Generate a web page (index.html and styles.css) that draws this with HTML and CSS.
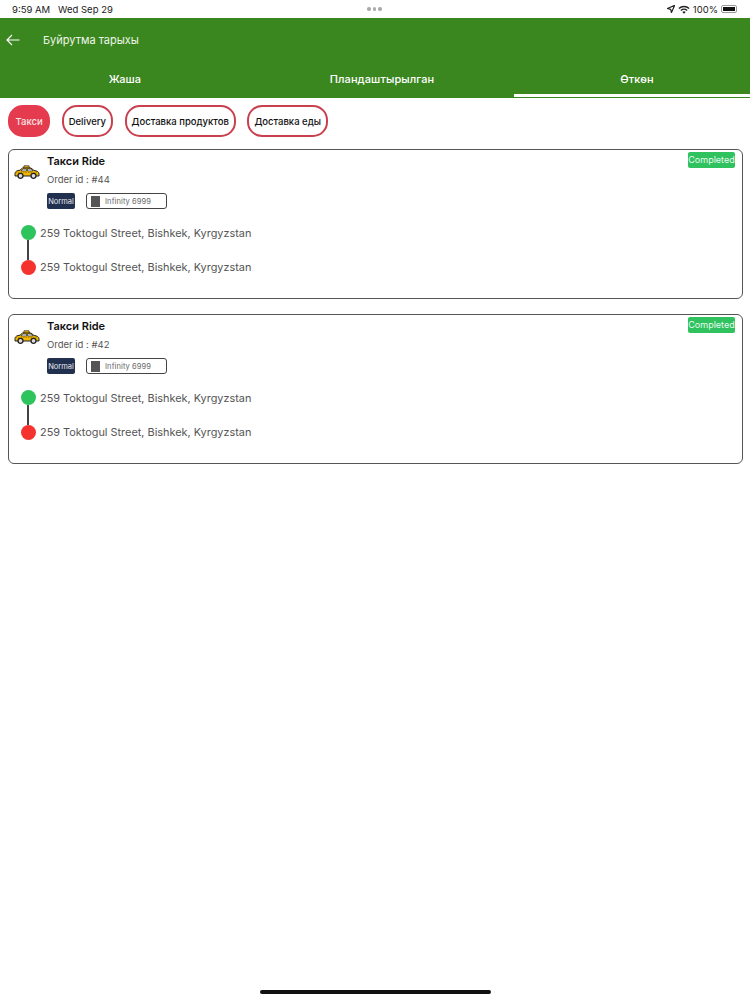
FILE: index.html
```html
<!DOCTYPE html>
<html lang="en">
<head>
    <meta charset="UTF-8">
    <meta name="viewport" content="width=device-width, initial-scale=1.0">
    <title>Буйрутма тарыхы</title>
    <link rel="stylesheet" href="styles.css">
</head>
<body>
    <!-- Status bar -->
    <div class="status-bar">
        <span class="status-time"><span>9:59 AM</span><span>Wed Sep 29</span></span>
        <span class="status-dots"><i></i><i></i><i></i></span>
        <span class="status-right">
            <svg width="8" height="8" viewBox="0 0 10 10"><path d="M9.5.5 5.6 9.5 4.6 5.4.5 4.4z" fill="none" stroke="#222" stroke-width="1.5" stroke-linejoin="round"/></svg>
            <svg width="12" height="9" viewBox="0 0 12 9"><path d="M.4 3a8 8 0 0 1 11.2 0l-1 1.1a6.5 6.5 0 0 0-9.2 0zM2.4 5a5.2 5.2 0 0 1 7.2 0l-1 1.1a3.7 3.7 0 0 0-5.2 0zM4.3 7a2.4 2.4 0 0 1 3.4 0L6 8.8z" fill="#222"/></svg>
            <span>100%</span>
            <span class="battery"><span class="battery-fill"></span></span>
        </span>
    </div>

    <!-- Header -->
    <header class="app-header">
        <div class="title-row">
            <svg class="back-icon" width="14" height="12" viewBox="0 0 14 12"><path d="M13.5 6H1M6 1 1 6l5 5" fill="none" stroke="#fff" stroke-width="1.2"/></svg>
            <span class="page-title">Буйрутма тарыхы</span>
        </div>
        <nav class="tabs">
            <div class="tab tab-new">Жаша</div>
            <div class="tab tab-planned">Пландаштырылган</div>
            <div class="tab tab-past active">Өткөн</div>
        </nav>
    </header>

    <!-- Category filter -->
    <div class="chips">
        <div class="chip selected">Такси</div>
        <div class="chip">Delivery</div>
        <div class="chip">Доставка продуктов</div>
        <div class="chip">Доставка еды</div>
    </div>

    <main class="orders">
        <div class="order-card">
            <svg class="taxi-icon" width="26" height="14" viewBox="0 0 26 14">
                <path d="M10 .8h5l.5 2.500h-6z" fill="#f2b705" stroke="#222" stroke-width=".7"/>
                <path d="M1 8.500c0-2 2-3 5-3.300L8.500 3h8.500l3 2.500c3 .3 5 1.300 5 3.500v2H1z" fill="#f2b705" stroke="#222" stroke-width="1" stroke-linejoin="round"/>
                <path d="M9 4h3.500v2H7zM13.500 4H17l2 2h-5.500z" fill="#dfe8e8" stroke="#222" stroke-width=".6"/>
                <path d="M1.500 7.500h23" stroke="#8a6a00" stroke-width=".6" stroke-dasharray="1.500 1"/>
                <circle cx="6.500" cy="10.800" r="2.500" fill="#ddd" stroke="#222" stroke-width="1.300"/>
                <circle cx="19.500" cy="10.800" r="2.500" fill="#ddd" stroke="#222" stroke-width="1.300"/>
            </svg>
            <div class="order-body">
                <div class="order-title">Такси Ride</div>
                <div class="order-id">Order id : #44</div>
                <div class="tags">
                    <span class="tag-type">Normal</span>
                    <span class="tag-car"><i class="car-thumb"></i>Infinity 6999</span>
                </div>
            </div>
            <span class="status-badge">Completed</span>
            <div class="route">
                <div class="stop"><i class="dot green"></i>259 Toktogul Street, Bishkek, Kyrgyzstan</div>
                <div class="stop"><i class="dot red"></i>259 Toktogul Street, Bishkek, Kyrgyzstan</div>
            </div>
        </div>

        <div class="order-card">
            <svg class="taxi-icon" width="26" height="14" viewBox="0 0 26 14">
                <path d="M10 .8h5l.5 2.500h-6z" fill="#f2b705" stroke="#222" stroke-width=".7"/>
                <path d="M1 8.500c0-2 2-3 5-3.300L8.500 3h8.500l3 2.500c3 .3 5 1.300 5 3.500v2H1z" fill="#f2b705" stroke="#222" stroke-width="1" stroke-linejoin="round"/>
                <path d="M9 4h3.500v2H7zM13.500 4H17l2 2h-5.500z" fill="#dfe8e8" stroke="#222" stroke-width=".6"/>
                <path d="M1.500 7.500h23" stroke="#8a6a00" stroke-width=".6" stroke-dasharray="1.500 1"/>
                <circle cx="6.500" cy="10.800" r="2.500" fill="#ddd" stroke="#222" stroke-width="1.300"/>
                <circle cx="19.500" cy="10.800" r="2.500" fill="#ddd" stroke="#222" stroke-width="1.300"/>
            </svg>
            <div class="order-body">
                <div class="order-title">Такси Ride</div>
                <div class="order-id">Order id : #42</div>
                <div class="tags">
                    <span class="tag-type">Normal</span>
                    <span class="tag-car"><i class="car-thumb"></i>Infinity 6999</span>
                </div>
            </div>
            <span class="status-badge">Completed</span>
            <div class="route">
                <div class="stop"><i class="dot green"></i>259 Toktogul Street, Bishkek, Kyrgyzstan</div>
                <div class="stop"><i class="dot red"></i>259 Toktogul Street, Bishkek, Kyrgyzstan</div>
            </div>
        </div>
    </main>

    <div class="home-indicator"></div>
</body>
</html>
```

FILE: styles.css
```css
* {
    box-sizing: border-box;
    margin: 0;
    padding: 0;
}

body {
    font-family: Inter, 'Liberation Sans', sans-serif;
    background: #fff;
    width: 750px;
    height: 1000px;
    position: relative;
    overflow: hidden;
}

.status-bar {
    height: 18px;
    padding: 0 13px 0 12px;
    display: grid;
    grid-template-columns: 1fr auto 1fr;
    align-items: center;
    font-size: 9.5px;
    color: #222;
}

.status-time {
    display: flex;
    gap: 8px;
}

.status-dots {
    display: flex;
    gap: 2px;
}

.status-dots i {
    width: 3.5px;
    height: 3.5px;
    border-radius: 50%;
    background: #aaa;
}

.status-right {
    display: flex;
    justify-content: flex-end;
    align-items: center;
    gap: 3px;
}

.battery {
    width: 16px;
    height: 8px;
    padding: 1px;
    border: 1px solid #999;
    border-radius: 2px;
}

.battery-fill {
    display: block;
    height: 100%;
    background: #111;
}

.app-header {
    height: 80px;
    background: #3b871f;
    color: #fff;
    display: flex;
    flex-direction: column;
}

.title-row {
    height: 44px;
    padding-left: 6px;
    display: flex;
    align-items: center;
}

.page-title {
    margin-left: 23px;
    font-size: 11px;
    color: #eef5ea;
}

.tabs {
    height: 35px;
    display: flex;
}

.tab {
    padding-top: 10px;
    text-align: center;
    font-size: 11px;
    font-weight: 500;
    letter-spacing: 0.1px;
}

.tab-new {
    width: 250px;
}

.tab-planned {
    width: 264px;
}

.tab-past {
    width: 236px;
    padding-left: 10px;
}

.tab.active {
    border-bottom: 3px solid #fff;
}

.chips {
    padding: 7px 8px 0;
    display: flex;
    gap: 11.5px;
}

.chip {
    height: 32px;
    padding: 0 5px;
    display: flex;
    align-items: center;
    border: 2px solid #c9404f;
    border-radius: 15px;
    font-size: 9.5px;
    font-weight: 500;
    color: #111;
    white-space: nowrap;
}

.chip.selected {
    padding: 0 5.5px;
    background: #e43b4e;
    border-color: #e43b4e;
    color: #fbe3e5;
}

.orders {
    padding: 12px 7px 0 8px;
    display: flex;
    flex-direction: column;
    gap: 15px;
}

.order-card {
    height: 150px;
    padding: 5px 7px 0 5px;
    border: 1px solid #555;
    border-radius: 6px;
    display: grid;
    grid-template-columns: 33px 1fr auto;
    align-content: start;
}

.taxi-icon {
    margin-top: 10px;
}

.order-title {
    font-size: 11px;
    font-weight: 600;
    color: #111;
    line-height: 13px;
}

.order-id {
    margin-top: 6px;
    font-size: 9.5px;
    color: #555;
    line-height: 12px;
}

.tags {
    margin-top: 7px;
    display: flex;
    align-items: center;
    gap: 11px;
}

.tag-type {
    width: 28px;
    height: 16px;
    line-height: 17px;
    text-align: center;
    background: #22304f;
    border-radius: 2px;
    font-size: 7.500px;
    color: #e8ebf0;
}

.tag-car {
    width: 81px;
    height: 16px;
    padding-left: 4px;
    display: flex;
    align-items: center;
    border: 1px solid #444;
    border-radius: 3px;
    font-size: 7.500px;
    letter-spacing: 0.1px;
    color: #666;
}

.car-thumb {
    width: 9px;
    height: 11px;
    margin-right: 5px;
    background: #555;
}

.status-badge {
    align-self: start;
    margin-top: -3px;
    width: 47px;
    height: 16px;
    line-height: 16px;
    text-align: center;
    background: #2fc25f;
    border-radius: 2px;
    font-size: 9px;
    color: #e9f9ee;
}

.route {
    grid-column: 1 / -1;
    margin-top: 16px;
    margin-left: 7px;
    display: flex;
    flex-direction: column;
    gap: 19.5px;
}

.stop {
    height: 15px;
    display: flex;
    align-items: center;
    gap: 4px;
    font-size: 10.9px;
    color: #555;
}

.dot {
    width: 15px;
    height: 15px;
    border-radius: 50%;
    position: relative;
}

.dot.green {
    background: #2dc45e;
}

/* connector between the two stops */
.dot.green::after {
    content: '';
    position: absolute;
    left: 6px;
    top: 15px;
    width: 1.5px;
    height: 20px;
    background: #444;
}

.dot.red {
    background: #f5332e;
}

.home-indicator {
    position: absolute;
    left: 260px;
    bottom: 6px;
    width: 231px;
    height: 4px;
    border-radius: 2px;
    background: #111;
}
```
